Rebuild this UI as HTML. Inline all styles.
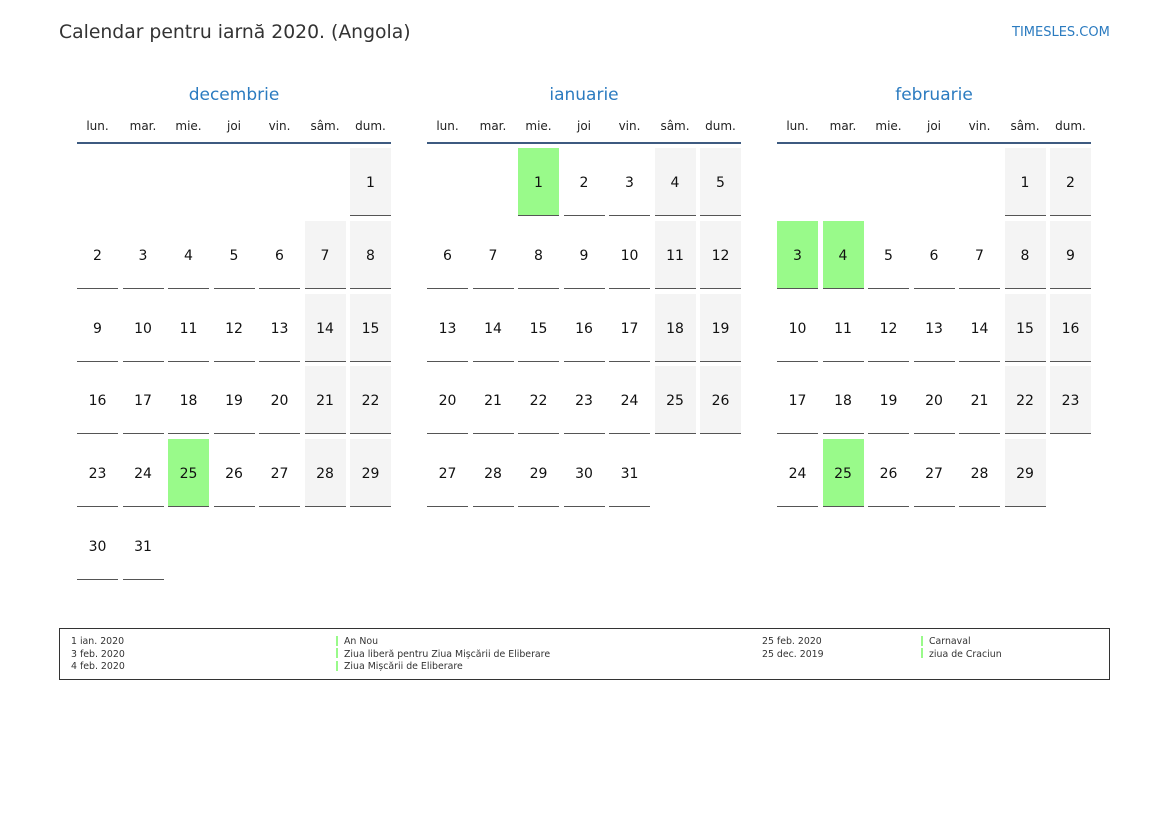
<!DOCTYPE html>
<html><head><meta charset="utf-8"><style>
body{margin:0;width:1169px;height:827px;background:#fff;font-family:"DejaVu Sans","Liberation Sans",sans-serif;position:relative;overflow:hidden}
.a{position:absolute}
.t{left:59px;top:22px;font-size:18.8px;color:#333}
.s{left:1012px;top:25px;font-size:13px;color:#2b7bc0}
.m{font-size:17px;color:#2b7bc0;width:314px;text-align:center;top:85px}
.w{font-size:12px;color:#222;width:41px;text-align:center;top:119px}
.hl{height:2px;background:#3d5a80;width:314px;top:142px}
.c{width:41px;height:67px;border-bottom:1.5px solid #555;text-align:center;line-height:70px;font-size:14px;color:#111}
.g{background:#f4f4f4}.h{background:#99fa8a}
.lg{left:59px;top:628px;width:1049px;height:50px;border:1px solid #333}
.l{font-size:9.4px;color:#333;line-height:12.5px}
.b{width:2px;height:10px;background:#99fa8a}
</style></head><body>
<div class="a t">Calendar pentru iarnă 2020. (Angola)</div>
<div class="a s">TIMESLES.COM</div>
<div id="cal"></div>
<div class="a lg"></div>
<div class="a l" style="left:71px;top:636px">1 ian. 2020<br>3 feb. 2020<br>4 feb. 2020</div>
<div class="a b" style="left:336px;top:636px"></div><div class="a b" style="left:336px;top:648px"></div><div class="a b" style="left:336px;top:661px"></div>
<div class="a l" style="left:344px;top:636px">An Nou<br>Ziua liberă pentru Ziua Mișcării de Eliberare<br>Ziua Mișcării de Eliberare</div>
<div class="a l" style="left:762px;top:636px">25 feb. 2020<br>25 dec. 2019</div>
<div class="a b" style="left:921px;top:636px"></div><div class="a b" style="left:921px;top:648px"></div>
<div class="a l" style="left:929px;top:636px">Carnaval<br>ziua de Craciun</div>
<script>
var months=[["decembrie",77,6,31,[25]],["ianuarie",427,2,31,[1]],["februarie",777,5,29,[3,4,25]]];
var days=["lun.","mar.","mie.","joi","vin.","sâm.","dum."];
var rows=[148,221,294,366,439,512];
var h="";
months.forEach(function(m){
 var x0=m[1];
 h+='<div class="a m" style="left:'+x0+'px">'+m[0]+'</div>';
 h+='<div class="a hl" style="left:'+x0+'px"></div>';
 for(var i=0;i<7;i++)h+='<div class="a w" style="left:'+(x0+i*45.5)+'px">'+days[i]+'</div>';
 for(var d=1;d<=m[3];d++){
  var p=m[2]+d-1,col=p%7,row=Math.floor(p/7);
  var cls="c"+(m[4].indexOf(d)>=0?" h":(col>=5?" g":""));
  h+='<div class="a '+cls+'" style="left:'+(x0+col*45.5)+'px;top:'+rows[row]+'px">'+d+'</div>';
 }
});
document.getElementById("cal").innerHTML=h;
</script>
</body></html>
